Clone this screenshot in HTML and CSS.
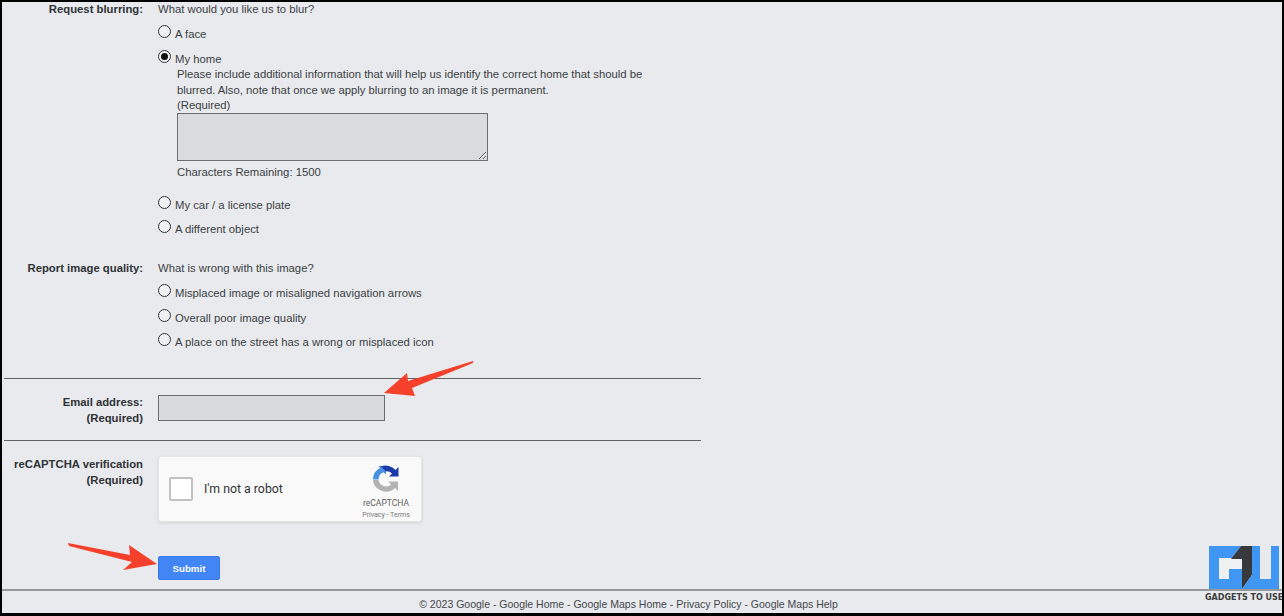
FILE: index.html
```html
<!DOCTYPE html>
<html lang="en">
<head>
<meta charset="utf-8">
<title>Report a problem</title>
<link rel="stylesheet" href="styles.css">
</head>
<body>
<div class="page">
  <main class="form">
    <section class="row row-blur">
      <div class="label">Request blurring:</div>
      <div class="field">
        <div class="question">What would you like us to blur?</div>
        <label class="option"><span class="radio"></span>A face</label>
        <label class="option"><span class="radio checked"></span>My home</label>
        <div class="detail">
          <p class="detail-text">Please include additional information that will help us identify the correct home that should be blurred. Also, note that once we apply blurring to an image it is permanent.<br>(Required)</p>
          <textarea class="area"></textarea>
          <div class="remaining">Characters Remaining: 1500</div>
        </div>
        <label class="option opt-car"><span class="radio"></span>My car / a license plate</label>
        <label class="option opt-tight"><span class="radio"></span>A different object</label>
      </div>
    </section>
    <section class="row row-quality">
      <div class="label">Report image quality:</div>
      <div class="field">
        <div class="question">What is wrong with this image?</div>
        <label class="option"><span class="radio"></span>Misplaced image or misaligned navigation arrows</label>
        <label class="option opt-tight"><span class="radio"></span>Overall poor image quality</label>
        <label class="option opt-tight"><span class="radio"></span>A place on the street has a wrong or misplaced icon</label>
      </div>
    </section>
    <hr class="rule rule-email">
    <section class="row row-email">
      <div class="label">Email address:<br>(Required)</div>
      <div class="field"><input class="email" type="text"></div>
    </section>
    <hr class="rule rule-captcha">
    <section class="row row-captcha">
      <div class="label">reCAPTCHA verification<br>(Required)</div>
      <div class="field">
        <div class="captcha">
          <span class="check"></span>
          <span class="robot">I'm not a robot</span>
          <div class="brand">
            <svg class="brand-icon" viewBox="0 0 28 28" width="28" height="28" aria-hidden="true">
              <path fill="#b3b3b3" d="M1 15h5.500a7.600 7.600 0 0 0 12.700 4.400l-2.900-3H26v9.500l-3-3A13 13 0 0 1 1 15z"/>
              <path fill="#4a90e2" d="M1 14.500A13 13 0 0 1 8 3L6.400 1.100H14v8.400l-2.600-2.300A7.600 7.600 0 0 0 6.600 14.500z"/>
              <path fill="#1c3aa9" d="M9 1.500A13 13 0 0 1 23.500 5L26.500 2v9.500H17l3-3A7.600 7.600 0 0 0 14 6.400z"/>
            </svg>
            <div class="brand-name">reCAPTCHA</div>
            <div class="brand-links">Privacy - Terms</div>
          </div>
        </div>
      </div>
    </section>
    <div class="actions"><button class="submit" type="button">Submit</button></div>
  </main>
  <footer class="footer">© 2023 Google - Google Home - Google Maps Home - Privacy Policy - Google Maps Help</footer>

  <svg class="arrow arrow-email" viewBox="0 0 90 36" width="90" height="36" aria-hidden="true">
    <path fill="#f5402c" d="M89 0L24 20L23 12L0 32L31 35L28 27L89 2Z"/>
  </svg>
  <svg class="arrow arrow-submit" viewBox="0 0 90 28" width="90" height="28" aria-hidden="true">
    <path fill="#f5402c" d="M0 0L62 12L61 2L89 21L55 27L64 19L1 3Z"/>
  </svg>

  <div class="logo">
    <svg class="logo-mark" viewBox="0 0 70 43" width="70" height="43" aria-hidden="true">
      <path fill="#3f97f3" d="M0 0H32L22 13H33V43H0z"/>
      <path fill="#eef0f2" d="M10 12H33V23H20V33H10z"/>
      <path fill="#3f97f3" d="M20 23H33V43H20z"/>
      <path fill="#37393d" d="M32 0H43V29L33 43V13H22z"/>
      <path fill="#3f97f3" d="M43 0H51V33H62V0H70V43H33L43 29z"/>
    </svg>
    <div class="logo-text">GADGETS TO USE</div>
  </div>
</div>
</body>
</html>
```
FILE: styles.css
```css
* { box-sizing: border-box; }
html, body { margin: 0; height: 616px; overflow: hidden; }
body { font-family: "Liberation Sans", Arial, sans-serif; font-size: 11.3px; color: #3c3f44; }
.page {
  position: relative;
  height: 616px;
  background: #e8eaed;
  border-style: solid;
  border-color: #000;
  border-width: 2px 2px 3px 2px;
  display: flex;
  flex-direction: column;
  overflow: hidden;
}
.form { flex: 1; width: 699px; padding-left: 2px; }
.row { display: grid; grid-template-columns: 139px 1fr; column-gap: 15px; line-height: 16px; }
.label { text-align: right; font-weight: 700; color: #2f3236; }
.row-blur { margin-top: -1px; }
.question { height: 16px; }
.option { display: block; height: 16px; margin-top: 9px; padding-left: 17px; position: relative; }
.opt-tight { margin-top: 8.5px; }
.radio {
  position: absolute;
  left: 0;
  top: -1px;
  width: 13px;
  height: 13px;
  border: 1px solid #333;
  border-radius: 50%;
  background: #eef0f2;
}
.radio.checked::after {
  content: "";
  position: absolute;
  left: 2px;
  top: 2px;
  width: 7px;
  height: 7px;
  border-radius: 50%;
  background: #111;
}
.detail { padding-left: 19px; width: 499px; }
.detail-text { margin: 0; line-height: 15.5px; }
.area {
  display: block;
  width: 311px;
  height: 48px;
  margin: -1px 0 0;
  background: #dadbde;
  border: 1px solid #6b6d70;
  border-radius: 0;
}
.remaining { margin-top: 3px; height: 16px; }
.opt-car { margin-top: 17px; }
.row-quality { margin-top: 23px; }
.rule { margin: 0; border: 0; border-top: 1px solid #5f6164; }
.rule-email { margin-top: 28px; }
.row-email { margin-top: 16px; }
.row-email .label { margin-top: -1px; }
.email {
  display: block;
  width: 227px;
  height: 26px;
  background: #d9dadd;
  border: 1px solid #6b6d70;
  border-radius: 0;
  padding: 0;
}
.rule-captcha { margin-top: 14px; }
.row-captcha { margin-top: 15px; }
.captcha {
  width: 264px;
  height: 66px;
  background: #f9f9f9;
  border: 1px solid #e4e5e7;
  border-radius: 3px;
  box-shadow: 0 1px 3px rgba(0,0,0,.1);
  display: flex;
  align-items: center;
  padding-left: 10px;
  font-family: Roboto, "Liberation Sans", sans-serif;
}
.check { width: 24px; height: 24px; background: #fff; border: 2px solid #c1c1c1; border-radius: 2px; flex: none; }
.robot { margin-left: 11px; font-size: 12.3px; color: #333; flex: 1; }
.brand { width: 58px; margin: 6px 6px 0 0; text-align: center; display: flex; flex-direction: column; align-items: center; color: #666; }
.brand-icon { display: block; }
.brand-name { font-size: 8.5px; line-height: 11px; margin-top: 5px; color: #5f5f5f; }
.brand-links { font-size: 7px; line-height: 10px; margin-top: 1px; color: #777; }
.actions { margin-top: 34px; padding-left: 154px; }
.submit {
  display: block;
  width: 62px;
  height: 24px;
  padding: 0;
  background: #4285f4;
  border: 1px solid #3b78e7;
  border-radius: 2px;
  color: #fff;
  font: 700 9.7px "Liberation Sans", Arial, sans-serif;
}
.footer {
  height: 24px;
  border-top: 2px solid #97999c;
  text-align: center;
  line-height: 27px;
  font-size: 10.5px;
  color: #44474b;
  width: 1280px;
  padding-right: 27px;
}
.arrow { position: absolute; display: block; }
.arrow-email { left: 382px; top: 359px; }
.arrow-submit { left: 66px; top: 541px; }
.logo { position: absolute; left: 1207px; top: 544px; width: 70px; }
.logo-mark { display: block; }
.logo-text { margin: 4px 0 0 -4px; font: 700 8px "DejaVu Sans", sans-serif; color: #3a3c40; white-space: nowrap; }
```
